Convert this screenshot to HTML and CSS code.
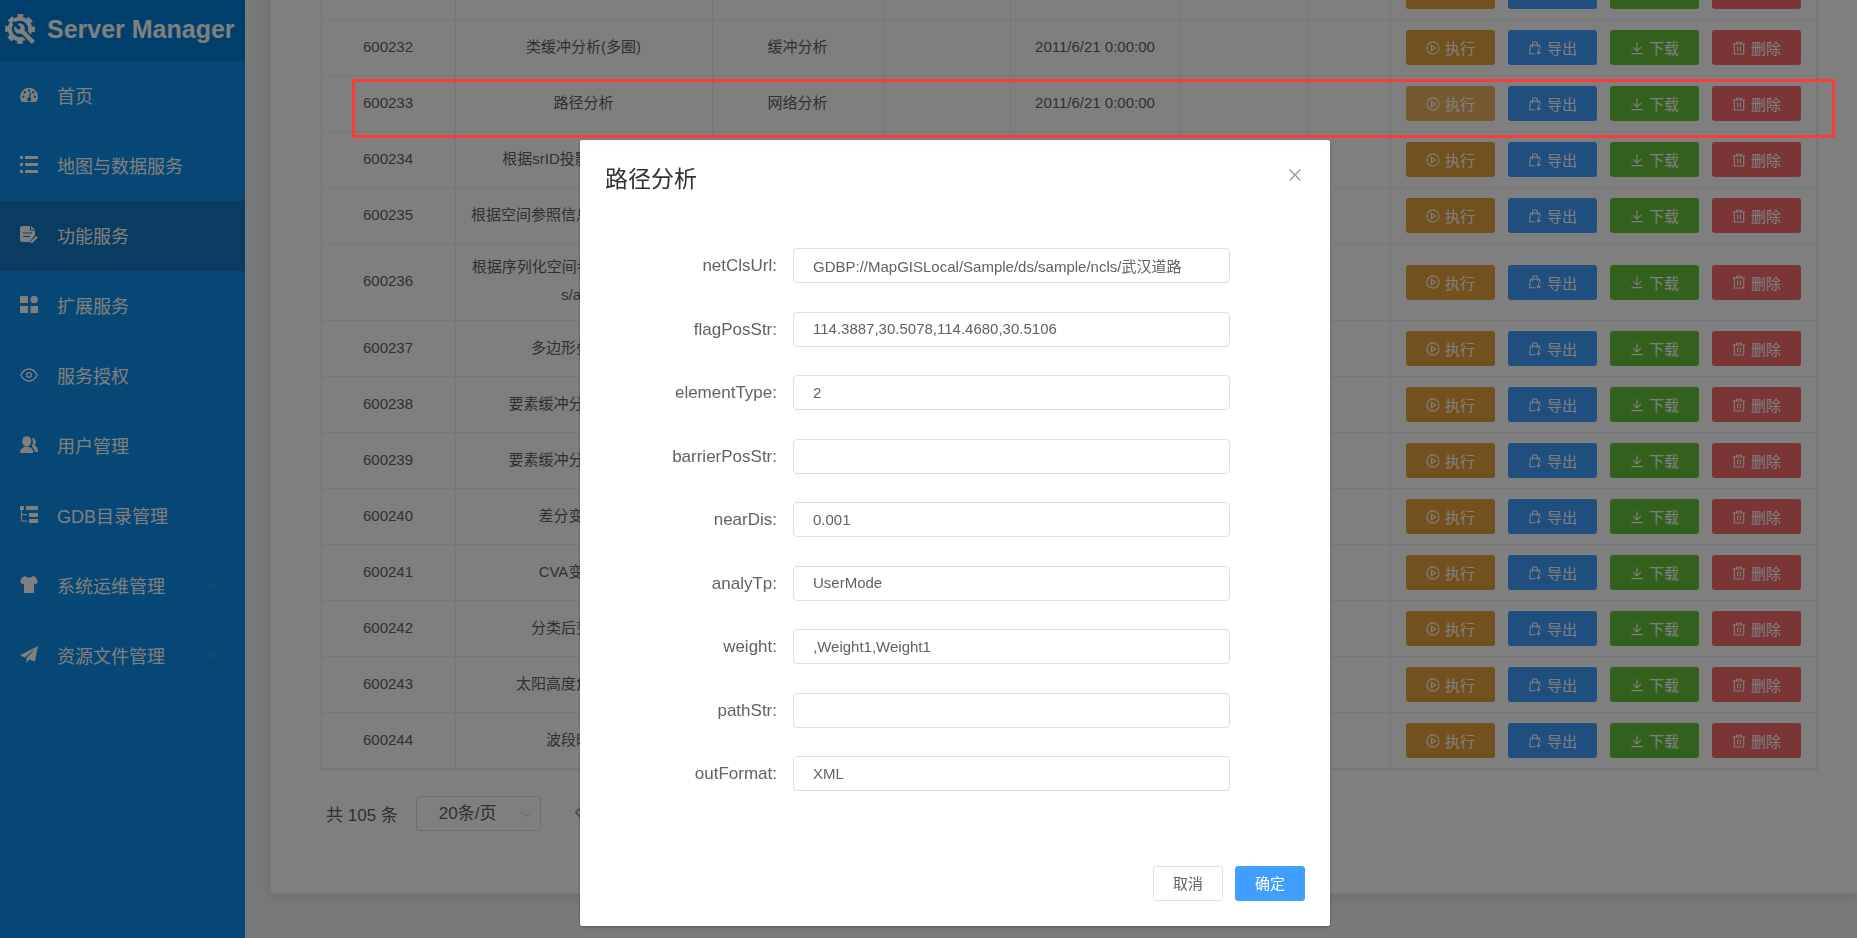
FILE: index.html
```html
<!DOCTYPE html>
<html lang="zh-CN">
<head>
<meta charset="utf-8">
<title>Server Manager</title>
<link rel="stylesheet" href="styles.css">
</head>
<body>
<svg class="sprite" aria-hidden="true">
  <symbol id="i-play" viewBox="0 0 14 14"><circle cx="7" cy="7" r="6.1"/><path d="M5.4 4.3v5.4L9.6 7z"/></symbol>
  <symbol id="i-export" viewBox="0 0 14 14"><path d="M7.5 12.8H1.6L2.3 4.3h9.4l.3 3.6M4.5 6.2V3.3a2.5 2.5 0 0 1 5 0v2.9M10.6 8.3v4.6M8.8 11.2l1.8 1.8 1.8-1.8"/></symbol>
  <symbol id="i-down" viewBox="0 0 14 14"><path d="M7 1.2v8.6M3 6.2l4 3.9 4-3.9M1.4 12.6h11.2"/></symbol>
  <symbol id="i-trash" viewBox="0 0 14 14"><path d="M.8 3h12.4M4.6 3V1.2h4.8V3M2.3 3v10h9.4V3M5.6 5.4v5M8.4 5.4v5"/></symbol>
  <symbol id="i-chev" viewBox="0 0 12 12"><path d="M1 3.5l5 5 5-5"/></symbol>
</svg>
<div class="app">
  <aside class="side">
    <header class="brand">
      <svg class="logo" viewBox="0 0 30 30"><g fill="none" stroke="#fff"><circle cx="15" cy="15" r="10.200" stroke-width="4"/><circle cx="15" cy="15" r="12.900" stroke-width="4" stroke-dasharray="5.800 4.332" stroke-dashoffset="2.900"/></g><path d="M17 17l12 12" stroke="#007ed6" stroke-width="7.500"/><circle cx="14.500" cy="14.500" r="5.300" fill="#fff"/><path d="M17 17l11.500 11.500" stroke="#fff" stroke-width="4.400"/><path d="M9 9l4.800 4.800" stroke="#007ed6" stroke-width="3.400" stroke-linecap="round"/></svg>
      <h1 class="brand-name">Server Manager</h1>
    </header>
    <nav class="menu">
      <a class="item" href="#"><svg class="mi" viewBox="0 0 18 18"><path fill="#fff" d="M1.200 15.300A9 9 0 1 1 16.800 15.300q-.5.700-1.300.7h-13q-.8 0-1.300-.7z"/><g fill="#0e8eea"><circle cx="3.200" cy="10.600" r="1.200"/><circle cx="4.800" cy="6.300" r="1.200"/><circle cx="9" cy="4.400" r="1.200"/><circle cx="13.400" cy="6.300" r="1.200"/><circle cx="14.900" cy="10.600" r="1.200"/><path d="M10 6.300l1.200.3-1 5a2.100 2.100 0 1 1-1.300-.3z"/></g></svg><span>首页</span></a>
      <a class="item" href="#"><svg class="mi" viewBox="0 0 18 18"><path fill="#fff" d="M0 0h3v3H0zM5 0h13v3H5zM0 7h3v3H0zM5 7h13v3H5zM0 14h3v3H0zM5 14h13v3H5z"/></svg><span>地图与数据服务</span></a>
      <a class="item active" href="#"><svg class="mi" viewBox="0 0 18 18"><path fill="#fff" d="M2 0h8v4.500h5V9L9.500 16H2q-2 0-2-2V2q0-2 2-2zM11 0l4 3.500h-4zM10.500 15.500l5.700-5.500 1.800 1.300-5.500 5.700h-2z"/><path stroke="#1476c2" stroke-width="1.200" d="M3 7h9M3 10.500h7"/></svg><span>功能服务</span></a>
      <a class="item" href="#"><svg class="mi" viewBox="0 0 18 18"><path fill="#fff" d="M0 0h8v7H0zM0 10h8v7H0zM10.500 10H18v7h-7.500z"/><circle cx="14.200" cy="3.600" r="3.700" fill="#fff"/></svg><span>扩展服务</span></a>
      <a class="item" href="#"><svg class="mi" viewBox="0 0 18 18"><g fill="none" stroke="#fff" stroke-width="1.300"><path d="M.7 9Q4 3 9 3t8.300 6Q14 15 9 15T.7 9z"/><circle cx="9" cy="9" r="2.300"/></g></svg><span>服务授权</span></a>
      <a class="item" href="#"><svg class="mi" viewBox="0 0 18 18"><g fill="#fff"><ellipse cx="6.700" cy="5.300" rx="4.500" ry="5.300"/><path d="M0 17q0-5 5-6.300h3.400q5 1.300 5 6.300zM12 1.800a4 4 0 0 1 2.300 7.200q3.700 2 3.700 7h-3.200q0-3-3-5.600 2.300-3.700.2-8.600z"/></g></svg><span>用户管理</span></a>
      <a class="item" href="#"><svg class="mi" viewBox="0 0 18 18"><path fill="#fff" d="M0 0h4v4H0zM6 0h12v4H6zM9 7h9v4H9zM9 13h9v4H9z"/><path fill="none" stroke="#fff" d="M1.500 4v11H7M1.500 8.500H7"/></svg><span>GDB目录管理</span></a>
      <a class="item" href="#"><svg class="mi" viewBox="0 0 18 18"><path fill="#fff" d="M5 0q4 3 8 0l3 1.500L18 6l-2.500 2.500-1.500-1V17H4V7.500l-1.500 1L0 6l2-4.500z"/></svg><span>系统运维管理</span><svg class="chev"><use href="#i-chev"/></svg></a>
      <a class="item" href="#"><svg class="mi" viewBox="0 0 18 18"><path fill="#fff" d="M18 0L0 9.200l4.800 2.200L15 3 6.500 12v5l2.800-3.500L15 15.500z"/></svg><span>资源文件管理</span><svg class="chev"><use href="#i-chev"/></svg></a>
    </nav>
  </aside>
  <main class="main">
    <section class="card">
      <div class="table-box">
      <table class="grid">
        <colgroup><col class="c-id"><col class="c-name"><col class="c-type"><col class="c-s"><col class="c-date"><col class="c-s"><col class="c-xs"><col></colgroup>
        <tbody>
        <tr><td></td><td></td><td></td><td></td><td></td><td></td><td></td><td><div class="ops"><button class="btn run"><svg><use href="#i-play"/></svg>执行</button><button class="btn exp"><svg><use href="#i-export"/></svg>导出</button><button class="btn dl"><svg><use href="#i-down"/></svg>下载</button><button class="btn del"><svg><use href="#i-trash"/></svg>删除</button></div></td></tr>
        <tr><td>600232</td><td>类缓冲分析(多圈)</td><td>缓冲分析</td><td></td><td>2011/6/21 0:00:00</td><td></td><td></td><td><div class="ops"><button class="btn run"><svg><use href="#i-play"/></svg>执行</button><button class="btn exp"><svg><use href="#i-export"/></svg>导出</button><button class="btn dl"><svg><use href="#i-down"/></svg>下载</button><button class="btn del"><svg><use href="#i-trash"/></svg>删除</button></div></td></tr>
        <tr><td>600233</td><td>路径分析</td><td>网络分析</td><td></td><td>2011/6/21 0:00:00</td><td></td><td></td><td><div class="ops"><button class="btn run focused"><svg><use href="#i-play"/></svg>执行</button><button class="btn exp"><svg><use href="#i-export"/></svg>导出</button><button class="btn dl"><svg><use href="#i-down"/></svg>下载</button><button class="btn del"><svg><use href="#i-trash"/></svg>删除</button></div></td></tr>
        <tr><td>600234</td><td>根据srID投影坐标点转换</td><td></td><td></td><td></td><td></td><td></td><td><div class="ops"><button class="btn run"><svg><use href="#i-play"/></svg>执行</button><button class="btn exp"><svg><use href="#i-export"/></svg>导出</button><button class="btn dl"><svg><use href="#i-down"/></svg>下载</button><button class="btn del"><svg><use href="#i-trash"/></svg>删除</button></div></td></tr>
        <tr><td>600235</td><td>根据空间参照信息投影坐标点转换</td><td></td><td></td><td></td><td></td><td></td><td><div class="ops"><button class="btn run"><svg><use href="#i-play"/></svg>执行</button><button class="btn exp"><svg><use href="#i-export"/></svg>导出</button><button class="btn dl"><svg><use href="#i-down"/></svg>下载</button><button class="btn del"><svg><use href="#i-trash"/></svg>删除</button></div></td></tr>
        <tr><td>600236</td><td>根据序列化空间参照信息转换点(g<br>s/arcs)</td><td></td><td></td><td></td><td></td><td></td><td><div class="ops"><button class="btn run"><svg><use href="#i-play"/></svg>执行</button><button class="btn exp"><svg><use href="#i-export"/></svg>导出</button><button class="btn dl"><svg><use href="#i-down"/></svg>下载</button><button class="btn del"><svg><use href="#i-trash"/></svg>删除</button></div></td></tr>
        <tr><td>600237</td><td>多边形叠加分析</td><td></td><td></td><td></td><td></td><td></td><td><div class="ops"><button class="btn run"><svg><use href="#i-play"/></svg>执行</button><button class="btn exp"><svg><use href="#i-export"/></svg>导出</button><button class="btn dl"><svg><use href="#i-down"/></svg>下载</button><button class="btn del"><svg><use href="#i-trash"/></svg>删除</button></div></td></tr>
        <tr><td>600238</td><td>要素缓冲分析单圈模式</td><td></td><td></td><td></td><td></td><td></td><td><div class="ops"><button class="btn run"><svg><use href="#i-play"/></svg>执行</button><button class="btn exp"><svg><use href="#i-export"/></svg>导出</button><button class="btn dl"><svg><use href="#i-down"/></svg>下载</button><button class="btn del"><svg><use href="#i-trash"/></svg>删除</button></div></td></tr>
        <tr><td>600239</td><td>要素缓冲分析多圈模式</td><td></td><td></td><td></td><td></td><td></td><td><div class="ops"><button class="btn run"><svg><use href="#i-play"/></svg>执行</button><button class="btn exp"><svg><use href="#i-export"/></svg>导出</button><button class="btn dl"><svg><use href="#i-down"/></svg>下载</button><button class="btn del"><svg><use href="#i-trash"/></svg>删除</button></div></td></tr>
        <tr><td>600240</td><td>差分变化检测</td><td></td><td></td><td></td><td></td><td></td><td><div class="ops"><button class="btn run"><svg><use href="#i-play"/></svg>执行</button><button class="btn exp"><svg><use href="#i-export"/></svg>导出</button><button class="btn dl"><svg><use href="#i-down"/></svg>下载</button><button class="btn del"><svg><use href="#i-trash"/></svg>删除</button></div></td></tr>
        <tr><td>600241</td><td>CVA变化检测</td><td></td><td></td><td></td><td></td><td></td><td><div class="ops"><button class="btn run"><svg><use href="#i-play"/></svg>执行</button><button class="btn exp"><svg><use href="#i-export"/></svg>导出</button><button class="btn dl"><svg><use href="#i-down"/></svg>下载</button><button class="btn del"><svg><use href="#i-trash"/></svg>删除</button></div></td></tr>
        <tr><td>600242</td><td>分类后变化检测</td><td></td><td></td><td></td><td></td><td></td><td><div class="ops"><button class="btn run"><svg><use href="#i-play"/></svg>执行</button><button class="btn exp"><svg><use href="#i-export"/></svg>导出</button><button class="btn dl"><svg><use href="#i-down"/></svg>下载</button><button class="btn del"><svg><use href="#i-trash"/></svg>删除</button></div></td></tr>
        <tr><td>600243</td><td>太阳高度角辐射校正</td><td></td><td></td><td></td><td></td><td></td><td><div class="ops"><button class="btn run"><svg><use href="#i-play"/></svg>执行</button><button class="btn exp"><svg><use href="#i-export"/></svg>导出</button><button class="btn dl"><svg><use href="#i-down"/></svg>下载</button><button class="btn del"><svg><use href="#i-trash"/></svg>删除</button></div></td></tr>
        <tr><td>600244</td><td>波段时序法</td><td></td><td></td><td></td><td></td><td></td><td><div class="ops"><button class="btn run"><svg><use href="#i-play"/></svg>执行</button><button class="btn exp"><svg><use href="#i-export"/></svg>导出</button><button class="btn dl"><svg><use href="#i-down"/></svg>下载</button><button class="btn del"><svg><use href="#i-trash"/></svg>删除</button></div></td></tr>
        </tbody>
      </table>
      </div>
      <div class="pager">
        <span>共 105 条</span>
        <span class="size"><select class="size-select" aria-label="每页条数"><option>20条/页</option></select><svg class="chev"><use href="#i-chev"/></svg></span>
        <button class="prev" aria-label="上一页"><svg viewBox="0 0 12 12"><path d="M8.500 1l-5 5 5 5"/></svg></button>
      </div>
    </section>
  </main>
</div>

<div class="mask">
  <div class="dialog" role="dialog" aria-labelledby="dlg-title">
    <header class="dlg-head">
      <h2 class="dlg-title" id="dlg-title">路径分析</h2>
      <button class="close" aria-label="关闭"><svg viewBox="0 0 12 12"><path d="M.5.500l11 11M11.500.500l-11 11"/></svg></button>
    </header>
    <form class="form">
      <div class="field"><label for="f1">netClsUrl:</label><input id="f1" type="text" value="GDBP://MapGISLocal/Sample/ds/sample/ncls/武汉道路"></div>
      <div class="field"><label for="f2">flagPosStr:</label><input id="f2" type="text" value="114.3887,30.5078,114.4680,30.5106"></div>
      <div class="field"><label for="f3">elementType:</label><input id="f3" type="text" value="2"></div>
      <div class="field"><label for="f4">barrierPosStr:</label><input id="f4" type="text" value=""></div>
      <div class="field"><label for="f5">nearDis:</label><input id="f5" type="text" value="0.001"></div>
      <div class="field"><label for="f6">analyTp:</label><input id="f6" type="text" value="UserMode"></div>
      <div class="field"><label for="f7">weight:</label><input id="f7" type="text" value=",Weight1,Weight1"></div>
      <div class="field"><label for="f8">pathStr:</label><input id="f8" type="text" value=""></div>
      <div class="field"><label for="f9">outFormat:</label><input id="f9" type="text" value="XML"></div>
    </form>
    <footer class="dlg-foot">
      <button class="act">取消</button>
      <button class="act primary">确定</button>
    </footer>
  </div>
</div>
<div class="callout"></div>
</body>
</html>
```
FILE: styles.css
```css
* { box-sizing: border-box; }
body, button, input, select {
  font-family: "Liberation Sans", "Noto Sans CJK SC", sans-serif;
}
body { margin: 0; color: #606266; font-size: 15px; overflow: hidden; }
button { cursor: pointer; }
.sprite { display: none; }

.app { display: flex; height: 100vh; }

/* sidebar */
.side { flex: none; width: 245px; background: #0e8eea; color: #fff; }
.brand { display: flex; align-items: center; gap: 12px; height: 61px; padding: 0 5px 3px; background: #007ed6; }
.logo { flex: none; width: 30px; height: 30px; }
.brand-name { margin: 0; font-size: 25px; line-height: 30px; white-space: nowrap; }
.item { display: flex; align-items: center; height: 70px; padding: 0 26px 2px 20px; color: #fff; font-size: 18px; text-decoration: none; }
.item span { flex: 1; margin-left: 19px; }
.item.active { background: #1476c2; }
.mi { width: 18px; height: 18px; }
.chev { width: 12px; height: 12px; fill: none; stroke: #909399; stroke-width: 1; }

/* content */
.main {
  flex: 1; min-width: 0; display: flex; flex-direction: column; justify-content: flex-end;
  padding: 0 0 44px 25px; background: #f0f2f5; overflow: hidden;
}
.card {
  flex: none; padding: 0 39px 62px 50px; background: #fff; border: 1px solid #ebeef5; border-right: 0;
  border-radius: 4px 0 0 4px; box-shadow: 0 2px 16px rgba(0, 0, 0, .12);
}
.table-box { border: 1px solid #e6e9f0; }
.grid { width: 100%; table-layout: fixed; border-collapse: separate; border-spacing: 0; }
.grid td {
  height: 56px; padding: 9px 9px 11px 8px; border: solid #ebeef5; border-width: 0 1px 1px 0;
  text-align: center; line-height: 28px;
}
.grid td:last-child { padding: 10px 8px; }
.c-id { width: 134px; }
.c-name { width: 257px; }
.c-type { width: 171px; }
.c-s { width: 127px; }
.c-date { width: 170px; }
.c-xs { width: 83px; }
.ops { display: flex; justify-content: center; gap: 13px; }
.btn {
  display: flex; align-items: center; justify-content: center; gap: 5px; flex: none;
  height: 35px; padding: 0 20px; border: 0; border-radius: 3px; color: #fff; font-size: 15px;
}
.btn svg { width: 14px; height: 14px; fill: none; stroke: #fff; stroke-width: 1.1; }
.run { background: #e6a23c; }
.run.focused { background: #ebb563; }
.exp { background: #409eff; }
.dl { background: #67c23a; }
.del { background: #f56c6c; }

.pager { display: flex; align-items: center; margin-top: 26px; padding-left: 5px; font-size: 17px; }
.size { display: flex; align-items: center; margin-left: 18px; width: 125px; height: 35px; border: 1px solid #dcdfe6; border-radius: 3px; padding-right: 8px; }
.size-select { flex: 1; min-width: 0; border: 0; background: none; appearance: none; color: #606266; font-size: 17px; padding: 0 0 0 22px; }
.size .chev { stroke: #c0c4cc; }
.prev { margin-left: 30px; padding: 0; width: 16px; height: 35px; border: 0; background: none; }
.prev svg { width: 13px; height: 13px; fill: none; stroke: #909399; stroke-width: 1.6; }

/* dialog */
.mask {
  position: fixed; inset: 0; display: flex; justify-content: center; align-items: flex-start;
  padding: 140px 0 0 53px; background: rgba(0, 0, 0, .5);
}
.dialog { width: 750px; padding: 25px; background: #fff; border-radius: 2px; box-shadow: 0 1px 3px rgba(0, 0, 0, .3); }
.dlg-head { display: flex; align-items: flex-start; justify-content: space-between; }
.dlg-title { margin: 0; color: #303133; font-size: 23px; font-weight: 400; line-height: 28px; }
.close { display: flex; padding: 4px; border: 0; background: none; }
.close svg { width: 12px; height: 12px; fill: none; stroke: #909399; stroke-width: 1.2; }
.form {
  display: flex; flex-direction: column; justify-content: space-between;
  min-height: 543px; margin-top: 55px; padding: 0 75px 0 0;
}
.field { display: flex; gap: 16px; }
.field label { flex: 1; text-align: right; font-size: 17px; line-height: 35px; }
.field input {
  width: 437px; height: 35px; padding: 0 18px 1px 19px; border: 1px solid #dcdfe6; border-radius: 4px;
  background: #fff; color: #606266; font-size: 15px;
}
.dlg-foot { display: flex; justify-content: flex-end; gap: 12px; margin-top: 75px; }
.act { height: 35px; padding: 0 19px 2px; border: 1px solid #dcdfe6; border-radius: 3px; background: #fff; color: #606266; font-size: 15px; }
.act.primary { border-color: #409eff; background: #409eff; color: #fff; }

/* marks the row whose dialog is open */
.callout { position: fixed; top: 79px; left: 352px; right: 22px; height: 59px; border: 3px solid #ff3a38; pointer-events: none; }
```
